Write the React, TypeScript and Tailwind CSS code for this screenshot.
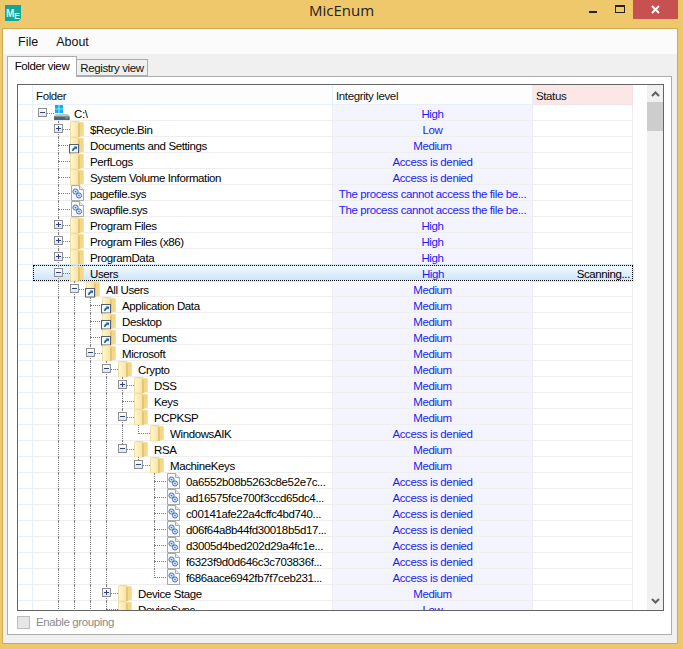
type IconKind = "drive" | "folder" | "link" | "file";
type Row = [number, string, IconKind, string, ("+" | "-" | "")?];

const DENIED = "Access is denied";
const BUSY = "The process cannot access the file be...";

const rows: Row[] = [
  [0, "C:\\", "drive", "High", "-"],
  [1, "$Recycle.Bin", "folder", "Low", "+"],
  [1, "Documents and Settings", "link", "Medium"],
  [1, "PerfLogs", "folder", DENIED],
  [1, "System Volume Information", "folder", DENIED],
  [1, "pagefile.sys", "file", BUSY],
  [1, "swapfile.sys", "file", BUSY],
  [1, "Program Files", "folder", "High", "+"],
  [1, "Program Files (x86)", "folder", "High", "+"],
  [1, "ProgramData", "folder", "High", "+"],
  [1, "Users", "folder", "High", "-"],
  [2, "All Users", "link", "Medium", "-"],
  [3, "Application Data", "link", "Medium"],
  [3, "Desktop", "link", "Medium"],
  [3, "Documents", "link", "Medium"],
  [3, "Microsoft", "folder", "Medium", "-"],
  [4, "Crypto", "folder", "Medium", "-"],
  [5, "DSS", "folder", "Medium", "+"],
  [5, "Keys", "folder", "Medium"],
  [5, "PCPKSP", "folder", "Medium", "-"],
  [6, "WindowsAIK", "folder", DENIED],
  [5, "RSA", "folder", "Medium", "-"],
  [6, "MachineKeys", "folder", "Medium", "-"],
  [7, "0a6552b08b5263c8e52e7c...", "file", DENIED],
  [7, "ad16575fce700f3ccd65dc4...", "file", DENIED],
  [7, "c00141afe22a4cffc4bd740...", "file", DENIED],
  [7, "d06f64a8b44fd30018b5d17...", "file", DENIED],
  [7, "d3005d4bed202d29a4fc1e...", "file", DENIED],
  [7, "f6323f9d0d646c3c703836f...", "file", DENIED],
  [7, "f686aace6942fb7f7ceb231...", "file", DENIED],
  [4, "Device Stage", "folder", "Medium", "+"],
  [4, "DeviceSync", "folder", "Low"],
];

// does a sibling at this level come after row i (the list runs on past the fold)
function continues(i: number, level: number) {
  for (let j = i + 1; j < rows.length; j++) {
    if (rows[j][0] < level) return false;
    if (rows[j][0] === level) return true;
  }
  return level <= 4;
}

function Folder() {
  return (
    <>
      <defs>
        <linearGradient id="fld" x1="0" x2="1" y1="0" y2="0">
          <stop offset="0" stopColor="#fef8d8" />
          <stop offset="1" stopColor="#f8e29c" />
        </linearGradient>
      </defs>
      <path d="M0.5 0.5 L7 0 L13.5 1.5 V14.5 L0.5 16 Z" fill="#f3dc94" />
      <path d="M0.5 1 L7.5 0.5 L8.5 2.5 V16 H0.5 Z" fill="url(#fld)" stroke="#e8cd80" strokeWidth="0.5" />
      <path d="M8.5 2.5 L13.5 1.5 V14.5 L8.5 16 Z" fill="#f2d888" />
      <path d="M9 2.5 V16" stroke="#d3b562" strokeWidth="1" />
    </>
  );
}

function ShortcutBadge() {
  return (
    <>
      <rect x="-0.5" y="7.5" width="9" height="8.5" fill="#f7f7f7" stroke="#5a5f6a" />
      <path d="M2 14 L2.4 11.8 L4.6 10.2 L3.4 9.5 H7 V12.6 L5.9 11.5 L3.8 12.9 L3.6 14 Z" fill="#1f5fa8" />
    </>
  );
}

function TreeIcon({ kind }: { kind: IconKind }) {
  return (
    <svg width="16" height="16" viewBox="0 0 16 16" className="shrink-0 overflow-visible">
      {kind === "drive" && (
        <>
          <path d="M1 0h3.7v3.7H1zM5.3 0h3.7v3.7H5.3zM1 4.3h3.7V8H1zM5.3 4.3h3.7V8H5.3z" fill="#0fb2f0" />
          <path d="M1.5 9 L14 9 L15.5 11 V15 H0 V11 Z" fill="#b9c4cc" />
          <rect x="0" y="11.5" width="15.5" height="3.5" fill="#4f6472" />
          <rect x="11" y="12.5" width="3" height="1" fill="#8fc56a" />
        </>
      )}
      {(kind === "folder" || kind === "link") && <Folder />}
      {kind === "link" && <ShortcutBadge />}
      {kind === "file" && (
        <>
          <path d="M1.5 0.5 H9.5 L13.5 4.5 V15.5 H1.5 Z" fill="#fdfdfd" stroke="#a8a8a8" />
          <path d="M9.5 0.5 V4.5 H13.5" fill="#ececec" stroke="#a8a8a8" />
          <circle cx="5.5" cy="6.5" r="2.6" fill="#cfe2f6" stroke="#3f78b8" />
          <circle cx="9" cy="10.5" r="2.6" fill="#cfe2f6" stroke="#3f78b8" />
          <circle cx="5.5" cy="6.5" r="0.8" fill="#3f78b8" />
          <circle cx="9" cy="10.5" r="0.8" fill="#3f78b8" />
        </>
      )}
    </svg>
  );
}

function Expander({ sign }: { sign: "+" | "-" }) {
  return (
    <svg width="9" height="9" viewBox="0 0 9 9">
      <defs>
        <linearGradient id="exp" x1="0" x2="0" y1="0" y2="1">
          <stop offset="0" stopColor="#ffffff" />
          <stop offset="1" stopColor="#dfe3ea" />
        </linearGradient>
      </defs>
      <rect x="0.5" y="0.5" width="8" height="8" fill="url(#exp)" stroke="#8e9094" />
      <path d="M2 4.5H7" stroke="#33437e" />
      {sign === "+" && <path d="M4.5 2V7" stroke="#33437e" />}
    </svg>
  );
}

function Guides({ index, level }: { index: number; level: number }) {
  const lines = [];
  for (let l = 1; l <= level; l++) {
    const more = continues(index, l);
    if (l < level && !more) continue;
    const height = more ? 16 : 9;
    lines.push(
      <span
        key={l}
        className="absolute top-0 border-l border-dotted border-[#7d7d7d]"
        style={{ left: 9 + 16 * l, height }}
      />
    );
  }
  return <>{lines}</>;
}

function TreeRow({ row, index }: { row: Row; index: number }) {
  const [level, name, icon, integrity, sign] = row;
  const selected = name === "Users";
  return (
    <div className="relative flex h-[16px] shrink-0">
      {selected && (
        <div className="absolute top-0 left-[15px] h-[16px] w-[600px] border border-dotted border-black bg-linear-to-b from-[#f2f9ff] to-[#cfe6fb] shadow-[0_0_0_1px_#cfe6fb]" />
      )}
      <div className="relative w-[15px] border-r border-b border-[#e7effb]" />
      <div
        className={
          selected
            ? "relative flex h-[15px] w-[300px] items-center text-black"
            : "relative flex w-[300px] items-center border-r border-b border-[#eeeef1] text-black"
        }
        style={{ paddingLeft: 21 + 16 * level }}
      >
        <Guides index={index} level={level} />
        <span
          className="absolute top-[8px] w-[12px] border-t border-dotted border-[#7d7d7d]"
          style={{ left: 9 + 16 * level }}
        />
        {sign && (
          <span className="absolute top-[3px] flex" style={{ left: 5 + 16 * level }}>
            <Expander sign={sign} />
          </span>
        )}
        <span className="relative">
          <TreeIcon kind={icon} />
        </span>
        <span className="relative top-px ml-[4px] whitespace-nowrap">{name}</span>
      </div>
      <div
        className={
          selected
            ? "relative w-[200px] truncate pt-px text-center text-[#1c1cf5]"
            : "relative w-[200px] truncate border-r border-b border-[#eeeef1] bg-[#f4f4fe] pt-px text-center text-[#1c1cf5]"
        }
      >
        {integrity}
      </div>
      <div
        className={
          selected
            ? "relative w-[100px] pt-px pr-[3px] text-right text-black"
            : "relative w-[100px] border-r border-b border-[#eeeef1] pt-px pr-[3px] text-right text-black"
        }
      >
        {selected ? "Scanning..." : ""}
      </div>
    </div>
  );
}

function Chevron({ up }: { up?: boolean }) {
  return (
    <svg width="9" height="7" viewBox="0 0 9 7">
      <path d={up ? "M1 6 L4.5 2.5 L8 6" : "M1 1 L4.5 4.5 L8 1"} fill="none" stroke="#606060" strokeWidth="2" />
    </svg>
  );
}

export default function App() {
  return (
    <div
      className="flex h-[649px] w-[683px] flex-col overflow-hidden bg-[#f0c86c] text-[11.5px] leading-[16px] tracking-[-0.38px]"
      style={{ fontFamily: '"Liberation Sans", Arial, sans-serif' }}
    >
      {/* Title bar */}
      <div className="grid h-[28px] shrink-0 grid-cols-[1fr_auto_1fr]">
        <div className="pt-[5px] pl-[5px]">
          <svg width="16" height="16" viewBox="0 0 16 16">
            <path d="M0 0H16V13.5L13.5 16H0Z" fill="#11a89c" />
            <text x="1" y="11.5" fontSize="10" fontWeight="bold" fill="#d8f5ee" fontFamily="Liberation Sans">
              M
            </text>
            <text x="9" y="14" fontSize="9" fontWeight="bold" fill="#d8f5ee" fontFamily="Liberation Sans">
              E
            </text>
          </svg>
        </div>
        <div className="text-[15px] leading-[20px] tracking-normal text-[#222]" style={{ fontFamily: '"Open Sans", sans-serif' }}>
          MicEnum
        </div>
        <div className="flex items-start justify-end pr-[5px]">
          <div className="mt-[11px] h-[2px] w-[8px] bg-[#222]" />
          <div className="mt-[5px] ml-[18px] h-[8px] w-[10px] border border-t-[2px] border-[#222]" />
          <div className="ml-[8px] flex h-[19px] w-[45px] items-center justify-center bg-[#c75050]">
            <svg width="9" height="9" viewBox="0 0 9 9">
              <path d="M1 1L8 8M8 1L1 8" stroke="#fff" strokeWidth="2" />
            </svg>
          </div>
        </div>
      </div>

      {/* Client area */}
      <div className="ml-[2px] flex h-[616px] w-[676px] shrink-0 flex-col border border-[#cfa956] bg-[#f0f0f0]">
        <div className="flex h-[25px] shrink-0 items-center gap-[18px] bg-[#fbfbfb] pl-[15px] text-[12.5px] tracking-normal text-[#111]">
          <span>File</span>
          <span>About</span>
        </div>

        {/* Tabs */}
        <div className="relative z-10 mt-[2px] ml-[4px] flex h-[20px] shrink-0 items-end">
          <div className="-mb-px h-[21px] w-[70px] border border-b-0 border-[#acacac] bg-white pt-px text-center whitespace-nowrap text-black">
            Folder view
          </div>
          <div className="h-[17px] w-[71px] border border-l-0 border-[#acacac] bg-[#f0f0f0] text-center whitespace-nowrap text-[#111]">
            Registry view
          </div>
        </div>

        <div className="ml-[4px] flex h-[559px] w-[665px] shrink-0 flex-col border border-[#acacac] bg-white pt-[7px] pl-[9px]">
          {/* Tree list */}
          <div className="flex h-[527px] w-[647px] shrink-0 border border-[#646464] bg-white">
            <div className="flex w-[629px] shrink-0 flex-col overflow-hidden">
              <div className="flex h-[20px] shrink-0 text-[#111]">
                <div className="w-[15px] border-r border-b border-[#e7effb]" />
                <div className="w-[300px] border-r border-b border-[#e7effb] bg-[#fdfdfd] pt-[3px] pl-[3px]">Folder</div>
                <div className="w-[200px] border-r border-b border-[#e7effb] bg-[#fdfdfd] pt-[3px] pl-[3px]">Integrity level</div>
                <div className="w-[100px] border-r border-b border-[#f4e2e4] bg-[#fce7e7] pt-[3px] pl-[3px]">Status</div>
              </div>
              {rows.map((row, i) => (
                <TreeRow key={i} row={row} index={i} />
              ))}
            </div>
            <div className="flex w-[16px] shrink-0 flex-col bg-[#f0f0f0]">
              <div className="flex h-[17px] shrink-0 items-center justify-center">
                <Chevron up />
              </div>
              <div className="h-[29px] shrink-0 bg-[#cdcdcd]" />
              <div className="flex-1" />
              <div className="flex h-[17px] shrink-0 items-center justify-center">
                <Chevron />
              </div>
            </div>
          </div>

          <div className="mt-[3px] flex items-center gap-[6px] text-[#8c8c8c]">
            <span className="h-[13px] w-[13px] border border-[#bcbcbc] bg-[#e6e6e6]" />
            <span>Enable grouping</span>
          </div>
        </div>
      </div>
    </div>
  );
}
